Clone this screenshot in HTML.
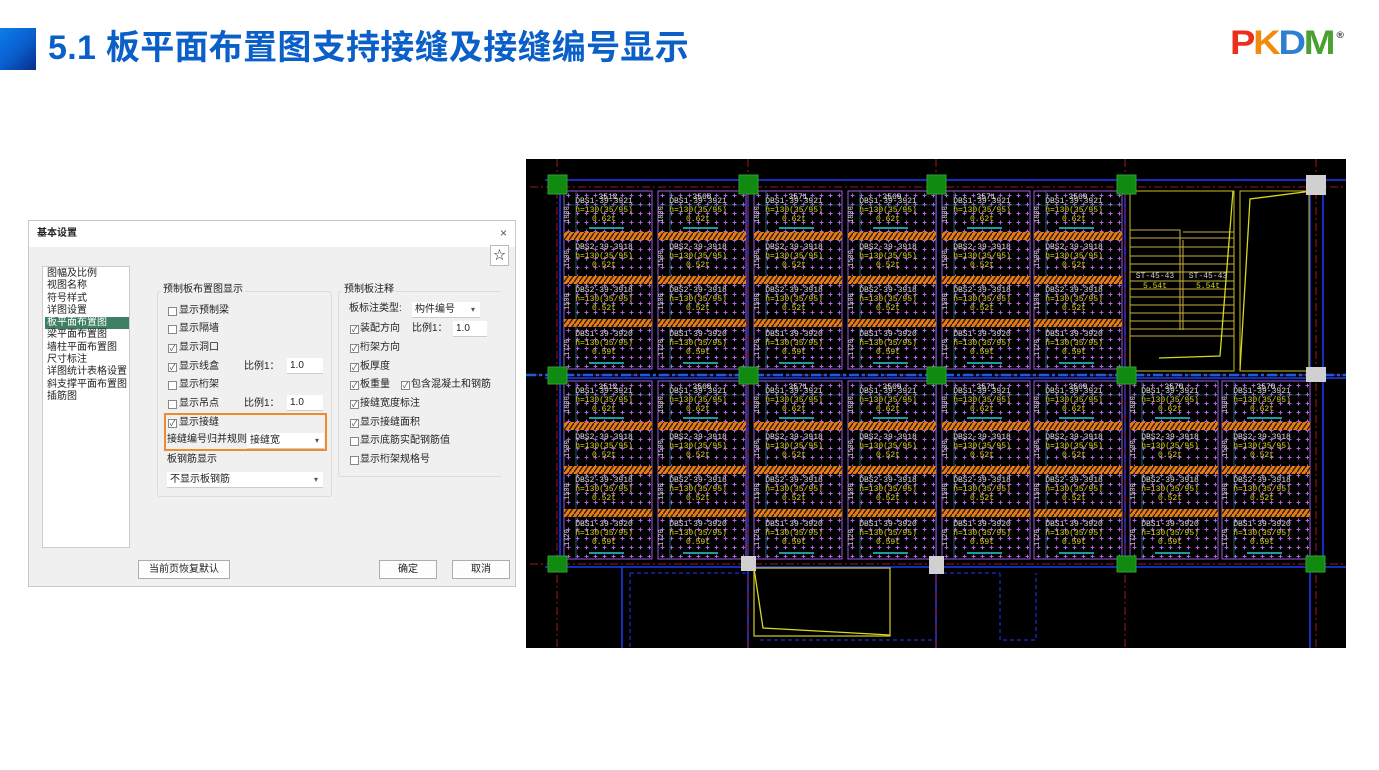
<!DOCTYPE html>
<html><head><meta charset="utf-8">
<style>
*{margin:0;padding:0;box-sizing:border-box}
body{width:1379px;height:770px;background:#fff;position:relative;overflow:hidden;font-family:"Liberation Sans","Noto Sans CJK SC",sans-serif}
.bar{position:absolute;left:0;top:28px;width:36px;height:42px;background:linear-gradient(135deg,#0a7fe6 0%,#0a5fcf 50%,#062f8a 100%)}
.title{position:absolute;left:48px;top:25px;font-size:34px;font-weight:bold;color:#0b5fc8;letter-spacing:0.3px;line-height:46px}
.logo{position:absolute;left:1230px;top:16px;font-size:34px;font-weight:900;font-family:"Liberation Sans",sans-serif;letter-spacing:-2px;line-height:38px;transform:scaleX(1.12);transform-origin:left top}
.dlg{position:absolute;left:28px;top:220px;width:488px;height:367px;background:#f0f0f0;border:1px solid #c8c8c8;font-size:10px;color:#222}
.dlg .tb{position:absolute;left:0;top:0;width:100%;height:26px;background:#fff}
.a{position:absolute;white-space:nowrap;line-height:12px}
.cb{position:absolute;width:9px;height:9px;border:1px solid #888;background:#fff;font-size:8px;line-height:7px;text-align:center;color:#444}
.inp{position:absolute;background:#fff;border-bottom:1px solid #ccc;padding-left:3px;line-height:15px;height:16px}
.btn{position:absolute;background:#fdfdfd;border:1px solid #adadad;text-align:center;line-height:17px;height:19px}
.grp{position:absolute;border:1px solid #dcdcdc;border-radius:3px}
.gt{position:absolute;background:#f0f0f0;padding:0 2px;line-height:12px}
.dd::after{content:"▾";position:absolute;right:5px;top:0;font-size:8px;color:#555}
</style></head><body>
<div class="bar"></div>
<div class="title">5.1 板平面布置图支持接缝及接缝编号显示</div>
<div class="logo"><span style="color:#e8301c">P</span><span style="color:#f08a10">K</span><span style="color:#2f7fd0">D</span><span style="color:#4aa030">M</span><sup style="font-size:9px;color:#333;vertical-align:16px;margin-left:3px">®</sup></div>

<div class="dlg">
 <div class="tb"></div>
 <div class="a" style="left:8px;top:7px;font-weight:bold">基本设置</div>
 <div class="a" style="left:471px;top:6px;font-size:12px;color:#555">×</div>
 <div class="a" style="left:461px;top:24px;width:19px;height:21px;border:1px solid #bbb;background:#fff;text-align:center;line-height:19px;font-size:12px">☆</div>
 <div class="a" style="left:13px;top:45px;width:88px;height:282px;background:#fff;border:1px solid #ccc"></div>
 <div class="a" style="left:16px;top:96px;width:84px;height:12px;background:#3f7f63"></div>
 <div class="a" style="left:18px;top:47px;line-height:12.3px">图幅及比例<br>视图名称<br>符号样式<br>详图设置<br><span style="color:#fff">板平面布置图</span><br>梁平面布置图<br>墙柱平面布置图<br>尺寸标注<br>详图统计表格设置<br>斜支撑平面布置图<br>插筋图</div>

 <div class="grp" style="left:128px;top:70px;width:175px;height:206px"></div>
 <div class="gt" style="left:132px;top:63px">预制板布置图显示</div>
 <div class="cb" style="left:139px;top:86px"></div><div class="a" style="left:150px;top:84px">显示预制梁</div>
 <div class="cb" style="left:139px;top:104px"></div><div class="a" style="left:150px;top:102px">显示隔墙</div>
 <div class="cb" style="left:139px;top:123px">✓</div><div class="a" style="left:150px;top:121px">显示洞口</div>
 <div class="cb" style="left:139px;top:142px">✓</div><div class="a" style="left:150px;top:140px">显示线盒</div>
 <div class="a" style="left:215px;top:140px">比例1：</div><div class="inp" style="left:258px;top:137px;width:36px">1.0</div>
 <div class="cb" style="left:139px;top:160px"></div><div class="a" style="left:150px;top:158px">显示桁架</div>
 <div class="cb" style="left:139px;top:179px"></div><div class="a" style="left:150px;top:177px">显示吊点</div>
 <div class="a" style="left:215px;top:177px">比例1：</div><div class="inp" style="left:258px;top:174px;width:36px">1.0</div>
 <div class="a" style="left:135px;top:192px;width:163px;height:38px;border:2px solid #f08a30"></div>
 <div class="cb" style="left:139px;top:198px">✓</div><div class="a" style="left:150px;top:196px">显示接缝</div>
 <div class="a" style="left:138px;top:213px">接缝编号归并规则</div>
 <div class="inp dd" style="left:218px;top:212px;width:77px">接缝宽</div>
 <div class="a" style="left:138px;top:233px">板钢筋显示</div>
 <div class="inp dd" style="left:138px;top:251px;width:156px">不显示板钢筋</div>

 <div class="grp" style="left:309px;top:70px;width:164px;height:186px;border-right:none"></div>
 <div class="gt" style="left:313px;top:63px">预制板注释</div>
 <div class="a" style="left:320px;top:82px">板标注类型:</div>
 <div class="inp dd" style="left:383px;top:81px;width:68px">构件编号</div>
 <div class="cb" style="left:321px;top:104px">✓</div><div class="a" style="left:331px;top:102px">装配方向</div>
 <div class="a" style="left:383px;top:102px">比例1：</div><div class="inp" style="left:424px;top:100px;width:34px">1.0</div>
 <div class="cb" style="left:321px;top:123px">✓</div><div class="a" style="left:331px;top:121px">桁架方向</div>
 <div class="cb" style="left:321px;top:142px">✓</div><div class="a" style="left:331px;top:140px">板厚度</div>
 <div class="cb" style="left:321px;top:160px">✓</div><div class="a" style="left:331px;top:158px">板重量</div>
 <div class="cb" style="left:372px;top:160px">✓</div><div class="a" style="left:382px;top:158px">包含混凝土和钢筋</div>
 <div class="cb" style="left:321px;top:179px">✓</div><div class="a" style="left:331px;top:177px">接缝宽度标注</div>
 <div class="cb" style="left:321px;top:198px">✓</div><div class="a" style="left:331px;top:196px">显示接缝面积</div>
 <div class="cb" style="left:321px;top:216px"></div><div class="a" style="left:331px;top:214px">显示底筋实配钢筋值</div>
 <div class="cb" style="left:321px;top:235px"></div><div class="a" style="left:331px;top:233px">显示桁架规格号</div>

 <div class="btn" style="left:109px;top:339px;width:92px">当前页恢复默认</div>
 <div class="btn" style="left:350px;top:339px;width:58px">确定</div>
 <div class="btn" style="left:423px;top:339px;width:58px">取消</div>
</div>

<svg style="position:absolute;left:526px;top:159px" width="820" height="489" viewBox="526 159 820 489" font-family="Liberation Mono,monospace">
<defs>
 <pattern id="dots" width="9" height="9" patternUnits="userSpaceOnUse">
  <path d="M4.5 2.5v4M2.5 4.5h4" stroke="#b060e0" stroke-width="1"/>
 </pattern>
 <pattern id="hat" width="5" height="7" patternUnits="userSpaceOnUse">
  <rect width="5" height="7" fill="#e87a10"/>
  <path d="M0 7L5 0" stroke="#1a1a1a" stroke-width="1.3"/>
 </pattern>
 <g id="sub">
  <text x="40" y="0" fill="#ddd" font-size="8" text-anchor="middle">DBS2-39-3918</text>
  <text x="40" y="9" fill="#d8d820" font-size="8" text-anchor="middle">h=130(35/95)</text>
  <text x="40" y="18" fill="#d8d820" font-size="8" text-anchor="middle">0.52t</text>
 </g>
 <g id="pan">
  <rect x="0" y="0" width="88" height="178" fill="#000" stroke="#9a5ce0"/>
  <rect x="1" y="1" width="86" height="176" fill="url(#dots)"/>
  <line x1="12" y1="0" x2="12" y2="178" stroke="#208080" stroke-width="0.8"/>
  <line x1="0" y1="14" x2="88" y2="14" stroke="#208080" stroke-width="0.6"/>
  <rect x="0" y="41" width="88" height="8" fill="url(#hat)"/>
  <rect x="0" y="85" width="88" height="8" fill="url(#hat)"/>
  <rect x="0" y="128" width="88" height="8" fill="url(#hat)"/>
  <text x="5" y="32" fill="#ddd" font-size="7" transform="rotate(-90 5 32)">1800</text>
  <text x="5" y="76" fill="#ddd" font-size="7" transform="rotate(-90 5 76)">1500</text>
  <text x="5" y="119" fill="#ddd" font-size="7" transform="rotate(-90 5 119)">1500</text>
  <text x="5" y="165" fill="#ddd" font-size="7" transform="rotate(-90 5 165)">1720</text>
  <text x="40" y="12" fill="#ddd" font-size="8" text-anchor="middle">DBS1-39-3921</text>
  <text x="40" y="21" fill="#d8d820" font-size="8" text-anchor="middle">h=130(35/95)</text>
  <text x="40" y="30" fill="#d8d820" font-size="8" text-anchor="middle">0.62t</text>
  <line x1="25" y1="37" x2="60" y2="37" stroke="#20d0d0" stroke-width="1.5"/>
  <use href="#sub" transform="translate(0,58)"/>
  <use href="#sub" transform="translate(0,101)"/>
  <text x="40" y="145" fill="#ddd" font-size="8" text-anchor="middle">DBS1-39-3920</text>
  <text x="40" y="154" fill="#d8d820" font-size="8" text-anchor="middle">h=130(35/95)</text>
  <text x="40" y="163" fill="#d8d820" font-size="8" text-anchor="middle">0.59t</text>
  <line x1="25" y1="172" x2="60" y2="172" stroke="#20d0d0" stroke-width="1.5"/>
 </g>
</defs>
<rect x="526" y="159" width="820" height="489" fill="#000"/>
<g stroke="#1a3cff" stroke-width="1.5" fill="none">
 <path d="M545 180H1346M545 378H1346M545 567H1346"/>
 <path d="M560 190V560M748 190V560M936 190V560M1125 190V560M1323 190V560"/>
 <path d="M622 567V648M1310 567V648M1310 190V378"/>
 <path d="M748 567V648M936 567V648"/>
</g>
<g stroke="#1a3cff" stroke-dasharray="4 3" fill="none">
 <path d="M630 573V648M630 573H748M936 573H1000M1000 573V640H1036V573M760 640H936"/>
</g>
<g stroke="#a01818" stroke-dasharray="8 3 2 3" fill="none">
 <path d="M530 187H1346M530 375H1346M530 564H1346"/>
 <path d="M557 159V648M748 159V648M936 159V648M1125 159V648M1316 159V648"/>
</g>
<g stroke="#1a5ce0" stroke-width="2.5" stroke-dasharray="10 3 3 3"><path d="M526 375H1346"/></g>
<use href="#pan" x="564" y="191"/><use href="#pan" x="658" y="191"/>
<use href="#pan" x="754" y="191"/><use href="#pan" x="848" y="191"/>
<use href="#pan" x="942" y="191"/><use href="#pan" x="1034" y="191"/>
<g fill="#ddd" font-size="8" text-anchor="middle">
<text x="608" y="199">3512</text><text x="702" y="199">3568</text><text x="798" y="199">3571</text><text x="892" y="199">3569</text><text x="986" y="199">3571</text><text x="1078" y="199">3569</text>
</g>
<use href="#pan" x="564" y="381"/><use href="#pan" x="658" y="381"/>
<use href="#pan" x="754" y="381"/><use href="#pan" x="848" y="381"/>
<use href="#pan" x="942" y="381"/><use href="#pan" x="1034" y="381"/>
<use href="#pan" x="1130" y="381"/><use href="#pan" x="1222" y="381"/>
<g fill="#ddd" font-size="8" text-anchor="middle">
<text x="608" y="389">3512</text><text x="702" y="389">3568</text><text x="798" y="389">3571</text><text x="892" y="389">3569</text><text x="986" y="389">3571</text><text x="1078" y="389">3569</text><text x="1174" y="389">3570</text><text x="1266" y="389">3570</text>
</g>
<g stroke="#c8b040" fill="none" stroke-width="1">
 <rect x="1130" y="191" width="104" height="180" stroke="#c8c020"/>
 <rect x="1240" y="191" width="69" height="180" stroke="#c8c020"/>
 <path d="M1130 230H1180V330M1183 232H1234M1130 238H1234M1130 247H1234M1130 256H1234M1130 264H1234M1130 272H1234M1130 281H1234M1130 289H1234M1130 297H1234M1130 305H1234M1130 313H1234M1130 321H1234M1130 329H1234M1183 240V330M1130 336H1234"/>
 <path d="M1159 358L1220 356L1233 191M1240 370L1250 199L1312 191" stroke="#d8d820" stroke-width="1.3"/>
</g>
<text x="1155" y="278" fill="#ccc" font-size="8" text-anchor="middle">ST-45-43</text>
<text x="1155" y="288" fill="#d8d820" font-size="8" text-anchor="middle">5.54t</text>
<text x="1208" y="278" fill="#ccc" font-size="8" text-anchor="middle">ST-45-43</text>
<text x="1208" y="288" fill="#d8d820" font-size="8" text-anchor="middle">5.54t</text>
<rect x="754" y="568" width="136" height="68" fill="none" stroke="#c8c020" stroke-width="1.3"/>
<path d="M754 568L763 628L890 635" fill="none" stroke="#d8d820" stroke-width="1.3"/>
<g fill="#108a10" stroke="#30a030">
 <rect x="548" y="175" width="19" height="19"/><rect x="739" y="175" width="19" height="19"/><rect x="927" y="175" width="19" height="19"/><rect x="1117" y="175" width="19" height="19"/>
 <rect x="548" y="367" width="19" height="17"/><rect x="739" y="367" width="19" height="17"/><rect x="927" y="367" width="19" height="17"/><rect x="1117" y="367" width="19" height="17"/>
 <rect x="548" y="556" width="19" height="16"/><rect x="1117" y="556" width="19" height="16"/><rect x="1306" y="556" width="19" height="16"/>
</g>
<g fill="#d0d0d0">
 <rect x="1306" y="175" width="20" height="20"/><rect x="1306" y="367" width="20" height="15"/>
 <rect x="741" y="556" width="15" height="15"/><rect x="929" y="556" width="15" height="18"/>
</g>
</svg>
</body></html>
